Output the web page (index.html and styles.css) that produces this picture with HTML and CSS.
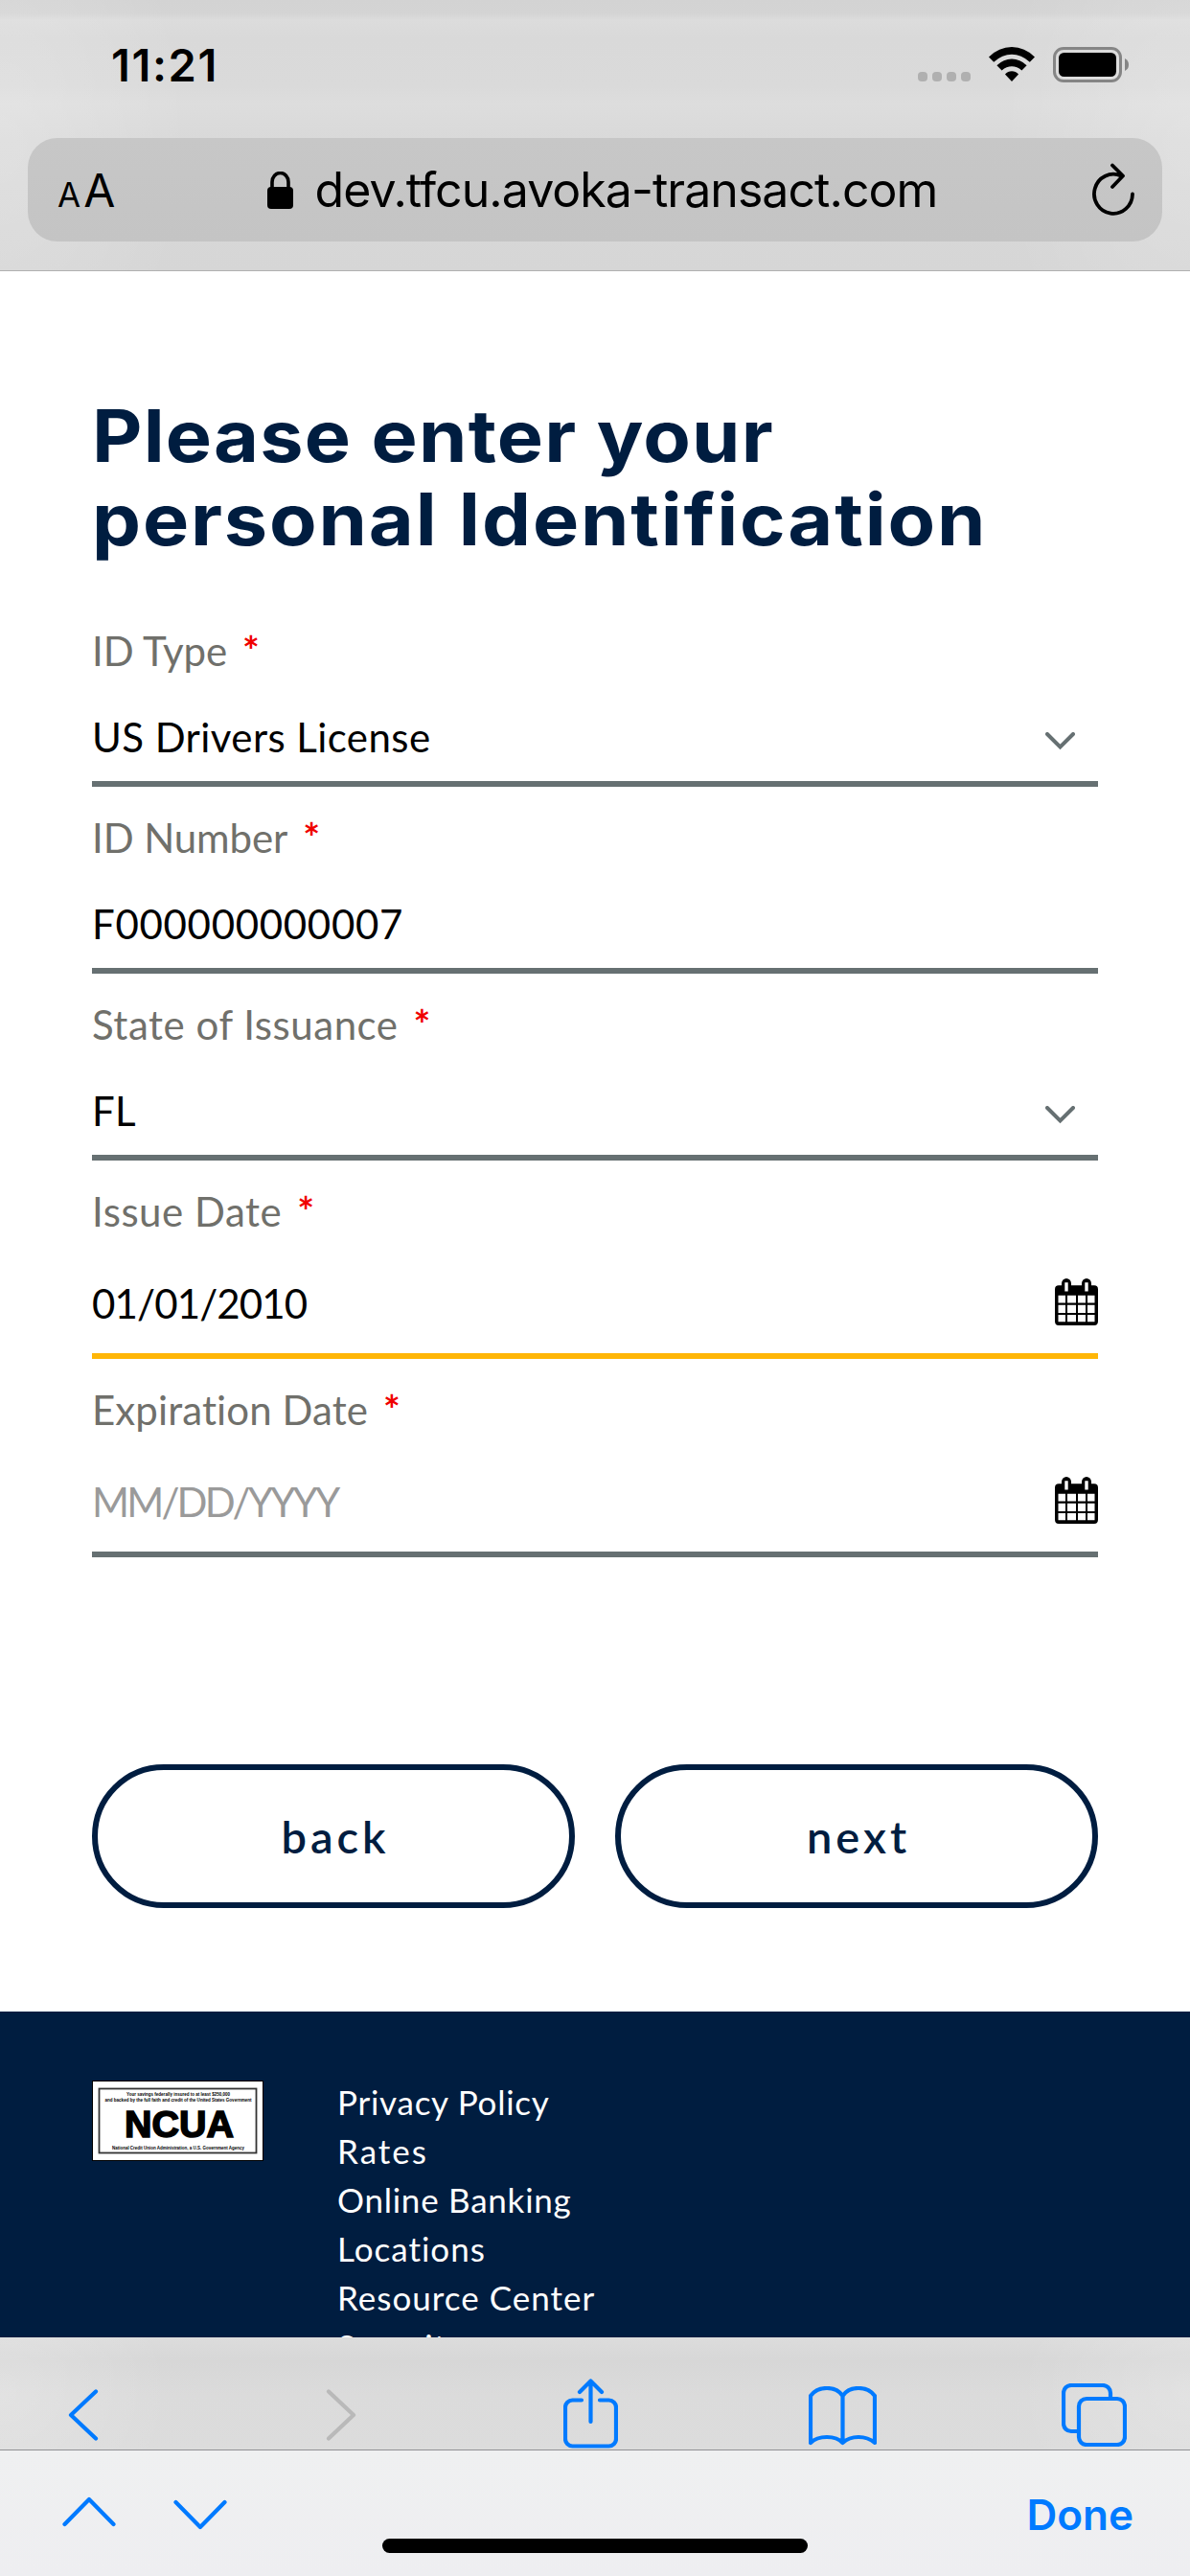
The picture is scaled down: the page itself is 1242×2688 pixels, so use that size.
FILE: index.html
```html
<!DOCTYPE html>
<html lang="en">
<head>
<meta charset="utf-8">
<title>Personal Identification</title>
<link rel="stylesheet" href="styles.css">
</head>
<body>
<div class="screen">
  <header class="chrome-top">
    <div class="status">
      <span class="time">11:21</span>
      <div class="indicators">
        <span class="dots"><i></i><i></i><i></i><i></i></span>
        <svg class="wifi" width="48" height="36" viewBox="0 0 48 36"><path d="M0 10.500Q10.500 0 24 0T48 10.500L42.800 15.800Q34 7.800 24 7.800T5.200 15.800Z"/><path d="M8.400 19.200Q15.500 12.500 24 12.500T39.600 19.200L34.400 24.500Q29.500 20.300 24 20.300T13.600 24.500Z"/><path d="M17 28.500Q20 25.200 24 25.200T31 28.500L24 36Z"/></svg>
        <svg class="battery" width="80" height="37" viewBox="0 0 80 37"><rect x="1.500" y="1.500" width="69" height="34" rx="9.500" fill="none" stroke="#858585" stroke-width="3"/><rect x="6" y="6" width="60" height="25" rx="5.500"/><path d="M75 12Q79 14 79 18.500T75 25Z" fill="#858585"/></svg>
      </div>
    </div>
    <div class="address">
      <div class="reader"><span class="small-a">A</span><span class="big-a">A</span></div>
      <div class="url">
        <svg width="27" height="39" viewBox="0 0 27 39"><path d="M5 18V11a8.500 9.500 0 0 1 17 0V18" fill="none" stroke="#000" stroke-width="3.600"/><rect y="16" width="27" height="23" rx="4"/></svg>
        <span class="host">dev.tfcu.avoka-transact.com</span>
      </div>
      <svg class="reload" width="46" height="56" viewBox="0 0 46 56" fill="none" stroke="#000" stroke-width="3.800" stroke-linecap="round" stroke-linejoin="round"><path d="M43 32.500A20 20.500 0 1 1 31 13.500M22 2.500L33 13.500L22 25"/></svg>
    </div>
  </header>

  <main class="content">
    <h1 class="title"><span class="t1">Please enter your</span><br><span class="t2">personal Identification</span></h1>

    <form class="form">
      <div class="field">
        <label><span class="l1">ID Type</span><b>*</b></label>
        <div class="value"><span class="v1">US Drivers License</span>
          <svg class="caret" width="31" height="19" viewBox="0 0 31 19"><path d="M2 2L15.500 15.500L29 2"/></svg></div>
      </div>
      <div class="field">
        <label><span class="l2">ID Number</span><b>*</b></label>
        <div class="value"><span class="v2">F000000000007</span></div>
      </div>
      <div class="field">
        <label><span class="l3">State of Issuance</span><b>*</b></label>
        <div class="value"><span class="v3">FL</span>
          <svg class="caret" width="31" height="19" viewBox="0 0 31 19"><path d="M2 2L15.500 15.500L29 2"/></svg></div>
      </div>
      <div class="field date active">
        <label><span class="l4">Issue Date</span><b>*</b></label>
        <div class="value"><span class="v4">01/01/2010</span>
          <svg class="calendar" width="45" height="49" viewBox="0 0 45 47" preserveAspectRatio="none"><path fill-rule="evenodd" d="M4 7H7V5a5 5 0 0 1 10 0V7H28V5a5 5 0 0 1 10 0V7H41a4 4 0 0 1 4 4V43a4 4 0 0 1-4 4H4a4 4 0 0 1-4-4V11a4 4 0 0 1 4-4ZM10.300 4V13H13.700V4ZM31.300 4V13H34.700V4ZM3.500 17V24.500H11V17ZM13 17V24.500H22V17ZM24 17V24.500H32V17ZM34 17V24.500H41.500V17ZM3.500 26.500V34.500H11V26.500ZM13 26.500V34.500H22V26.500ZM24 26.500V34.500H32V26.500ZM34 26.500V34.500H41.500V26.500ZM3.500 36.500V43.500H11V36.500ZM13 36.500V43.500H22V36.500ZM24 36.500V43.500H32V36.500ZM34 36.500V43.500H41.500V36.500Z"/></svg></div>
      </div>
      <div class="field date">
        <label><span class="l5">Expiration Date</span><b>*</b></label>
        <div class="value"><span class="v5 placeholder">MM/DD/YYYY</span>
          <svg class="calendar" width="45" height="49" viewBox="0 0 45 47" preserveAspectRatio="none"><path fill-rule="evenodd" d="M4 7H7V5a5 5 0 0 1 10 0V7H28V5a5 5 0 0 1 10 0V7H41a4 4 0 0 1 4 4V43a4 4 0 0 1-4 4H4a4 4 0 0 1-4-4V11a4 4 0 0 1 4-4ZM10.300 4V13H13.700V4ZM31.300 4V13H34.700V4ZM3.500 17V24.500H11V17ZM13 17V24.500H22V17ZM24 17V24.500H32V17ZM34 17V24.500H41.500V17ZM3.500 26.500V34.500H11V26.500ZM13 26.500V34.500H22V26.500ZM24 26.500V34.500H32V26.500ZM34 26.500V34.500H41.500V26.500ZM3.500 36.500V43.500H11V36.500ZM13 36.500V43.500H22V36.500ZM24 36.500V43.500H32V36.500ZM34 36.500V43.500H41.500V36.500Z"/></svg></div>
      </div>
    </form>

    <div class="actions">
      <button type="button" class="btn">back</button>
      <button type="button" class="btn">next</button>
    </div>
  </main>

  <footer class="footer">
    <svg class="ncua" width="179" height="84" viewBox="0 0 179 84" font-family="'Liberation Sans',Arial,sans-serif" font-weight="700" text-anchor="middle"><rect x=".5" y=".5" width="178" height="83" fill="#fff" stroke="#000"/><rect x="7.500" y="8.500" width="164" height="67" fill="none" stroke="#333" stroke-width="1.800"/><text x="90" y="16" font-size="5.200" textLength="108" lengthAdjust="spacingAndGlyphs">Your savings federally insured to at least $250,000</text><text x="90" y="22.300" font-size="5.200" textLength="153" lengthAdjust="spacingAndGlyphs">and backed by the full faith and credit of the United States Government</text><text x="91" y="58.500" font-size="39" textLength="114" lengthAdjust="spacingAndGlyphs" stroke="#000" stroke-width="1.600">NCUA</text><text x="90" y="71.500" font-size="5.200" textLength="138" lengthAdjust="spacingAndGlyphs">National Credit Union Administration, a U.S. Government Agency</text></svg>
    <nav class="links">
      <a class="f1">Privacy Policy</a>
      <a class="f2">Rates</a>
      <a class="f3">Online Banking</a>
      <a class="f4">Locations</a>
      <a class="f5">Resource Center</a>
      <a class="f5">Security</a>
    </nav>
  </footer>

  <div class="toolbar">
    <svg class="nav-back" width="32" height="54" viewBox="0 0 32 54"><path d="M29 2.500L3 27L29 51.500"/></svg>
    <svg class="nav-forward" width="32" height="54" viewBox="0 0 32 54"><path d="M3 2.500L29 27L3 51.500"/></svg>
    <svg class="share" width="57" height="73" viewBox="0 0 57 73"><path d="M19 22.500H9.500A7.500 7.500 0 0 0 2 30V63A7.500 7.500 0 0 0 9.500 70.500H47.500A7.500 7.500 0 0 0 55 63V30A7.500 7.500 0 0 0 47.500 22.500H38M28.500 45V3M17 14L28.500 2.500L40 14"/></svg>
    <svg class="book" width="71" height="62" viewBox="0 0 71 62"><path d="M2 59V10Q8 2 19 2T35.500 10Q41 2 52 2T69 10V59Q62 53 52 53T35.500 59Q30 53 19 53T2 59ZM35.500 10V59"/></svg>
    <svg class="tabs" width="68" height="66" viewBox="0 0 68 66"><path d="M16 50H10a8 8 0 0 1-8-8V10a8 8 0 0 1 8-8H43a8 8 0 0 1 8 8v5"/><rect x="18" y="16" width="48" height="48" rx="8"/></svg>
  </div>

  <div class="accessory">
    <svg class="prev" width="56" height="32" viewBox="0 0 56 32"><path d="M2.500 29L28 3L53.500 29"/></svg>
    <svg class="nextf" width="56" height="32" viewBox="0 0 56 32"><path d="M2.500 3L28 29L53.500 3"/></svg>
    <span class="done">Done</span>
    <div class="home"></div>
  </div>
</div>
</body>
</html>
```
FILE: styles.css
```css
* { box-sizing: border-box; }
body { margin: 0; background: #fff; color: #000; }
svg { display: block; flex: none; }

.screen {
  width: 1242px;
  height: 2688px;
  overflow: hidden;
  display: flex;
  flex-direction: column;
  font-family: Lato, "Noto Sans", sans-serif;
}

/* Browser chrome, top */
.chrome-top {
  height: 283px;
  flex: none;
  padding: 36px 29px 0;
  border-bottom: 1px solid #b0b0b0;
  background:
    radial-gradient(ellipse 200px 300px at 0 50%, rgba(255,255,255,.2), transparent),
    radial-gradient(ellipse 200px 300px at 100% 50%, rgba(255,255,255,.2), transparent),
    linear-gradient(#d3d3d3 0, #d4d4d4 14px, #dcdcdc 21px, #d9d9d9 40px, #dadada 90px, #dddddd 108px, #d9d9d9 145px, #d6d6d6 282px);
  font-family: Inter, "Liberation Sans", sans-serif;
}
.status { height: 108px; display: flex; justify-content: space-between; padding: 0 34px 0 87px; }
.time { font-size: 47px; line-height: 64px; font-weight: 600; letter-spacing: 1.6px; }
.indicators { display: flex; align-items: flex-start; padding-top: 13px; }
.dots { display: flex; gap: 5px; margin: 26px 19px 0 0; }
.dots i { width: 10px; height: 10px; border-radius: 4px; background: #b0b0b0; }
.wifi { margin-right: 19px; }
.address {
  height: 108px;
  border-radius: 31px;
  background: linear-gradient(#c7c7c7, #c4c4c4);
  display: flex;
  justify-content: space-between;
  align-items: center;
  padding: 0 28px 0 31px;
}
.reader { width: 60px; display: flex; align-items: baseline; gap: 3px; }
.small-a { font-size: 35px; }
.big-a { font-size: 48px; }
.url { display: flex; align-items: center; gap: 23px; margin-right: 2px; }
.host { font-size: 50px; line-height: 64px; letter-spacing: -.96px; }

/* Page */
.content { flex: none; height: 1816px; padding: 128px 96px 0; }
.title { margin: 0 0 64px; font: 700 75px/87px Inter, "Open Sans", sans-serif; color: #001d40; white-space: nowrap; }
.title span { display: inline-block; transform: scaleX(1.08); transform-origin: left; }
.t1 { letter-spacing: 1.1px; }
.t2 { letter-spacing: 1.7px; }
.form { display: flex; flex-direction: column; gap: 23px; font-size: 42px; line-height: 60px; }
.field { border-bottom: 6px solid #667072; padding-bottom: 16px; display: flex; flex-direction: column; gap: 30px; }
.field label { display: flex; color: #70706b; }
.field b { color: #f00000; font-weight: 700; margin-left: 16px; }
.value { height: 60px; display: flex; justify-content: space-between; align-items: center; }
.l1, .l2 { letter-spacing: -.1px; }
.l3, .l4 { letter-spacing: .53px; }
.l5 { letter-spacing: .1px; }
.v1 { letter-spacing: .42px; }
.v2 { letter-spacing: .69px; }
.v3 { letter-spacing: .25px; }
.v4 { letter-spacing: -.85px; }
.v5 { letter-spacing: -2.8px; }
.caret { margin: 8px 24px 0 0; fill: none; stroke: #667072; stroke-width: 4; stroke-linecap: round; }
.date { gap: 36px; padding-bottom: 22px; }
.active { border-color: #ffb607; }
.calendar { align-self: flex-start; margin-top: 4px; }
.placeholder { color: #9a9a9a; }
.actions { display: grid; grid-template-columns: 1fr 1fr; gap: 42px; margin-top: 216px; }
.btn {
  height: 150px;
  border: 6px solid #001d40;
  border-radius: 75px;
  background: #fff;
  color: #001d40;
  font: 600 47px/60px Lato, sans-serif;
  letter-spacing: 4px;
  padding: 0 0 0 4px;
}

/* Footer */
.footer { flex: none; height: 340px; overflow: hidden; background: #001d40; padding: 69px 96px 0; display: flex; gap: 77px; }
.ncua { margin-top: 3px; }
.links { display: flex; flex-direction: column; color: #fff; font-size: 35px; line-height: 51px; }
.f1, .f3 { letter-spacing: .75px; }
.f2 { letter-spacing: 2px; }
.f4, .f5 { letter-spacing: 1px; }

/* Browser chrome, bottom */
.toolbar {
  flex: none;
  height: 118px;
  border-bottom: 1px solid #909094;
  background:
    radial-gradient(ellipse 180px 150px at 0 50%, rgba(255,255,255,.2), transparent),
    radial-gradient(ellipse 180px 150px at 100% 50%, rgba(255,255,255,.2), transparent),
    linear-gradient(#dcdcdc, #d7d7d7 25px, #dbdbdb 60px, #dcdcdc);
  display: flex;
  align-items: flex-start;
  padding: 0 67px 0 71px;
}
.toolbar svg, .accessory svg { fill: none; stroke: #007aff; stroke-width: 4.2; stroke-linecap: round; stroke-linejoin: round; }
.nav-back { margin-top: 54px; }
.toolbar .nav-forward { margin: 54px 0 0 237px; stroke: #b9b9b9; }
.share { margin: 43px 0 0 216px; }
.book { margin: 51px 0 0 199px; }
.tabs { margin: 48px 0 0 193px; }
.accessory {
  position: relative;
  flex: 1;
  background: linear-gradient(#eff0f1, #eeeef1);
  display: flex;
  align-items: flex-start;
  padding: 0 59px 0 65px;
}
.prev { margin-top: 48px; }
.nextf { margin: 51px 0 0 60px; }
.done { margin: 36px 0 0 auto; font: 600 44px/62px Inter, sans-serif; color: #007aff; }
.home { position: absolute; left: 399px; bottom: 24px; width: 444px; height: 15px; border-radius: 8px; background: #000; }
```
